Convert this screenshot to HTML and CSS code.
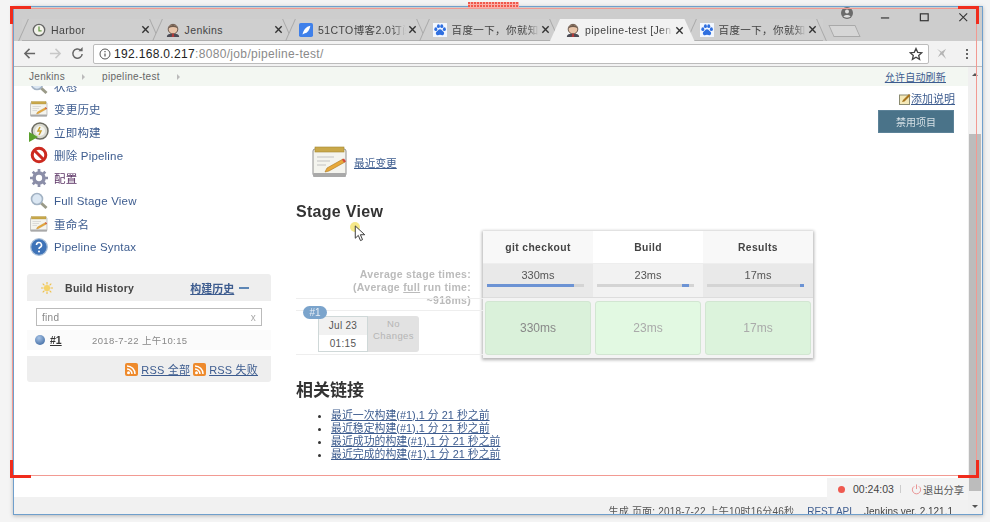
FILE: index.html
```html
<!DOCTYPE html>
<html>
<head>
    <meta charset="utf-8">
    <title>pipeline-test [Jenkins]</title>
    <link rel="stylesheet" href="styles.css">
</head>
<body>
    <svg class="defs" width="0" height="0">
        <symbol id="i-x" viewBox="0 0 10 10"><path d="M1.5 1.5l7 7M8.5 1.5l-7 7" stroke="#333" stroke-width="1.5" fill="none"/></symbol>
        <symbol id="i-jenkins" viewBox="0 0 16 16"><path d="M1 16c0-3 3-4 7-4s7 1 7 4z" fill="#4b4b55"/><circle cx="8" cy="7" r="5.5" fill="#e8c4a8" stroke="#5a4a40"/><path d="M3 6c1-5 9-5 10 0-3-2-7-2-10 0z" fill="#6d5a4c"/><path d="M7 12h2l.5 4h-3z" fill="#b23a3a"/></symbol>
        <symbol id="i-baidu" viewBox="0 0 16 16"><rect width="16" height="16" fill="#f2f7ff"/><g fill="#2f6fe0"><ellipse cx="3.2" cy="7" rx="1.7" ry="2.1"/><ellipse cx="6.2" cy="3.6" rx="1.7" ry="2.2"/><ellipse cx="10" cy="3.6" rx="1.7" ry="2.2"/><ellipse cx="13" cy="7" rx="1.7" ry="2.1"/><path d="M8 7c2 0 2.500 2 4 3 1.500 1.500.5 4-1.500 4-1 0-1.500-.5-2.500-.5s-1.500.5-2.500.5c-2 0-3-2.500-1.500-4 1.500-1 2-3 4-3z"/></g></symbol>
        <symbol id="i-search" viewBox="0 0 18 18"><path d="M10.500 10.500l6 5.500" stroke="#9a9a88" stroke-width="3"/><circle cx="7" cy="7" r="5.500" fill="#dbe7f3" stroke="#a3b3c4" stroke-width="1.600"/></symbol>
        <symbol id="i-notes" viewBox="0 0 36 32"><rect x="1" y="3" width="33" height="27" rx="2" fill="#f4f4ee" stroke="#8f8f8f"/><rect x="1" y="27" width="33" height="4" rx="1" fill="#a9a9a9"/><rect x="3" y="1" width="29" height="5" fill="#c9a84a" stroke="#a48830" stroke-width=".6"/><path d="M5 11h17M5 15h13M5 19h9" stroke="#c2c2c2"/><path d="M13 26l2-4 16-9 2 3-16 9z" fill="#e8a93a" stroke="#a8751e" stroke-width=".6"/><path d="M30 13.500l2-1 2 3-2 1z" fill="#d2473b"/></symbol>
        <symbol id="i-build" viewBox="0 0 20 20"><circle cx="11" cy="9" r="8" fill="#d9d9cf" stroke="#6c6c62" stroke-width="1.500"/><circle cx="11" cy="9" r="5" fill="#f4f4ee"/><path d="M11 5l-2 4h3l-2 4" stroke="#c9a12f" stroke-width="1.500" fill="none"/><path d="M0 10l9 5-9 5z" fill="#5aa02c"/></symbol>
        <symbol id="i-no" viewBox="0 0 18 18"><circle cx="9" cy="9" r="6.800" fill="#fff" stroke="#cc2a20" stroke-width="3"/><path d="M4.500 4.500l9 9" stroke="#cc2a20" stroke-width="3"/></symbol>
        <symbol id="i-gear" viewBox="0 0 20 20"><circle cx="10" cy="10" r="5.500" fill="none" stroke="#8b8ea8" stroke-width="4"/><path d="M10 0v4M10 16v4M0 10h4M16 10h4M3 3l3 3M14 14l3 3M17 3l-3 3M6 14l-3 3" stroke="#8b8ea8" stroke-width="3"/></symbol>
        <symbol id="i-help" viewBox="0 0 18 18"><circle cx="9" cy="9" r="8.300" fill="#3e73b8" stroke="#a9bfd8" stroke-width="1.300"/><path d="M6.500 7a2.500 2.500 0 1 1 3.700 2.200c-.9.500-1.200 1-1.200 1.800" stroke="#fff" stroke-width="1.600" fill="none"/><circle cx="9" cy="13.500" r="1" fill="#fff"/></symbol>
        <symbol id="i-rss" viewBox="0 0 13 13"><rect width="13" height="13" rx="2" fill="#ee8a2c"/><circle cx="3.500" cy="9.800" r="1.500" fill="#fff"/><path d="M2 6a5 5 0 0 1 5 5M2 3a8 8 0 0 1 8 8" stroke="#fff" stroke-width="1.500" fill="none"/></symbol>
    </svg>

    <div class="window">
        <!-- abas do navegador -->
        <div class="tabstrip">
            <div class="tab">
                <svg class="favicon" viewBox="0 0 16 16"><circle cx="8" cy="8" r="6.500" fill="#f2f2ea" stroke="#666" stroke-width="1.500"/><path d="M8 4v5h3" stroke="#6a9a4a" stroke-width="1.500" fill="none"/></svg>
                <span class="tab-title">Harbor</span>
                <svg class="tab-x"><use href="#i-x"/></svg>
            </div>
            <div class="tab">
                <svg class="favicon"><use href="#i-jenkins"/></svg>
                <span class="tab-title">Jenkins</span>
                <svg class="tab-x"><use href="#i-x"/></svg>
            </div>
            <div class="tab">
                <svg class="favicon" viewBox="0 0 16 16"><rect width="16" height="16" rx="2" fill="#3f80ea"/><path d="M4 13c1-5 4-9 9-10-1 5-3 8-7 9z" fill="#fff"/></svg>
                <span class="tab-title tab-fade">51CTO博客2.0订阅</span>
                <svg class="tab-x"><use href="#i-x"/></svg>
            </div>
            <div class="tab">
                <svg class="favicon"><use href="#i-baidu"/></svg>
                <span class="tab-title tab-fade">百度一下，你就知</span>
                <svg class="tab-x"><use href="#i-x"/></svg>
            </div>
            <div class="tab tab-active">
                <svg class="favicon"><use href="#i-jenkins"/></svg>
                <span class="tab-title tab-fade">pipeline-test [Jen</span>
                <svg class="tab-x"><use href="#i-x"/></svg>
            </div>
            <div class="tab">
                <svg class="favicon"><use href="#i-baidu"/></svg>
                <span class="tab-title tab-fade">百度一下，你就知</span>
                <svg class="tab-x"><use href="#i-x"/></svg>
            </div>
            <div class="tab-new"></div>
            <div class="win-controls">
                <svg class="profile" viewBox="0 0 12 12"><circle cx="6" cy="6" r="6" fill="#6b6b6b"/><circle cx="6" cy="4.600" r="2" fill="#ddd"/><path d="M2.500 9.500c1-2 6-2 7 0-1 1.500-6 1.500-7 0z" fill="#ddd"/></svg>
                <svg class="ctl" viewBox="0 0 12 12"><path d="M1 6.500h9" stroke="#333" stroke-width="1.300"/></svg>
                <svg class="ctl" viewBox="0 0 12 12"><rect x="1.500" y="2" width="8.500" height="7.500" fill="none" stroke="#333" stroke-width="1.300"/></svg>
                <svg class="ctl" viewBox="0 0 12 12"><path d="M1.500 1.500l8.500 8.500M10 1.500l-8.500 8.500" stroke="#333" stroke-width="1.200"/></svg>
            </div>
        </div>

        <!-- barra de endereço -->
        <div class="toolbar">
            <svg class="nav-btn" viewBox="0 0 14 14"><path d="M13 7H2M7 2L2 7l5 5" stroke="#666" stroke-width="1.600" fill="none"/></svg>
            <svg class="nav-btn nav-gap" viewBox="0 0 14 14"><path d="M1 7h11M7 2l5 5-5 5" stroke="#c8c8c8" stroke-width="1.600" fill="none"/></svg>
            <svg class="nav-btn nav-reload" viewBox="0 0 14 14"><path d="M12 7.500A5 5 0 1 1 10.500 3.500" stroke="#666" stroke-width="1.600" fill="none"/><path d="M8 4.500h4.500V0z" fill="#666"/></svg>
            <div class="omnibox">
                <svg class="info" viewBox="0 0 12 12"><circle cx="6" cy="6" r="5" fill="none" stroke="#555"/><path d="M6 5.500v3M6 3v1.200" stroke="#555" stroke-width="1.200"/></svg>
                <span class="url-host">192.168.0.217</span><span class="url-rest">:8080/job/pipeline-test/</span>
                <svg class="star" viewBox="0 0 14 14"><path d="M7 1.500l1.700 3.800 4 .4-3 2.700.9 4L7 10.300l-3.600 2.100.9-4-3-2.700 4-.4z" fill="none" stroke="#444" stroke-width="1.300"/></svg>
            </div>
            <svg class="ext" viewBox="0 0 14 14"><path d="M2 2l4 4-3 5 4-3 5 5-3-6 3-5-5 3z" fill="#b5b5b5"/></svg>
            <div class="menu-dots"><i></i><i></i><i></i></div>
        </div>

        <div class="viewport">
            <div class="page">
                <div class="breadcrumbs">
                    <a class="crumb">Jenkins</a><span class="crumb-arrow"></span>
                    <a class="crumb">pipeline-test</a><span class="crumb-arrow"></span>
                    <a class="auto-refresh">允许自动刷新</a>
                </div>

                <div class="content">
                    <div class="sidebar">
                        <ul class="tasks">
                            <li><svg class="task-icon"><use href="#i-search"/></svg><a>状态</a></li>
                            <li><svg class="task-icon" viewBox="0 0 36 32"><use href="#i-notes"/></svg><a>变更历史</a></li>
                            <li><svg class="task-icon task-icon-big"><use href="#i-build"/></svg><a>立即构建</a></li>
                            <li><svg class="task-icon"><use href="#i-no"/></svg><a>删除 Pipeline</a></li>
                            <li><svg class="task-icon"><use href="#i-gear"/></svg><a class="visited">配置</a></li>
                            <li><svg class="task-icon"><use href="#i-search"/></svg><a>Full Stage View</a></li>
                            <li><svg class="task-icon" viewBox="0 0 36 32"><use href="#i-notes"/></svg><a>重命名</a></li>
                            <li><svg class="task-icon"><use href="#i-help"/></svg><a>Pipeline Syntax</a></li>
                        </ul>

                        <div class="history">
                            <div class="history-head">
                                <svg class="sun" viewBox="0 0 14 14"><circle cx="7" cy="7" r="3.600" fill="#f5d36a"/><path d="M7 0v3M7 11v3M0 7h3M11 7h3M2 2l2 2M10 10l2 2M12 2l-2 2M4 10l-2 2" stroke="#efc04a" stroke-width="1.300"/></svg>
                                <span class="history-title">Build History</span>
                                <a class="history-trend">构建历史</a>
                                <span class="history-dash"></span>
                            </div>
                            <div class="history-body">
                                <div class="history-find"><span>find</span><span class="find-x">x</span></div>
                                <div class="history-row">
                                    <span class="ball"></span>
                                    <a class="build-no">#1</a>
                                    <span class="build-date">2018-7-22 上午10:15</span>
                                </div>
                            </div>
                            <div class="history-foot">
                                <svg class="rss"><use href="#i-rss"/></svg><a>RSS 全部</a>
                                <svg class="rss"><use href="#i-rss"/></svg><a>RSS 失败</a>
                            </div>
                        </div>
                    </div>

                    <div class="main">
                        <div class="actions">
                            <div class="add-desc">
                                <svg class="add-icon" viewBox="0 0 12 12"><rect x=".5" y="2" width="10" height="9.500" fill="#f5e9b8" stroke="#8b8b70"/><path d="M3 9l1-2 6-6 1.500 1.500-6 6z" fill="#a8751e"/></svg><a>添加说明</a>
                            </div>
                            <button class="btn-disable">禁用项目</button>
                        </div>

                        <div class="recent">
                            <svg class="recent-icon"><use href="#i-notes"/></svg>
                            <a>最近变更</a>
                        </div>

                        <h2 class="stage-title">Stage View</h2>

                        <div class="stage">
                            <div class="stage-left">
                                <div class="avg-label">
                                    Average stage times:<br>
                                    (Average <u>full</u> run time:<br>
                                    ~918ms)
                                </div>
                                <div class="build-row">
                                    <span class="build-badge">#1</span>
                                    <div class="build-date-box">
                                        <div class="date-day">Jul 23</div>
                                        <div class="date-time">01:15</div>
                                    </div>
                                    <div class="no-changes">No<br>Changes</div>
                                </div>
                            </div>

                            <div class="stage-card">
                                <div class="col">
                                    <div class="col-head">git checkout</div>
                                    <div class="col-avg">330ms<div class="bar"><div class="bar-fill" style="width:90%"></div></div></div>
                                    <div class="col-cell"><div class="cell cell-dark">330ms</div></div>
                                </div>
                                <div class="col col-alt">
                                    <div class="col-head">Build</div>
                                    <div class="col-avg">23ms<div class="bar"><div class="bar-fill" style="width:7%;margin-left:88%"></div></div></div>
                                    <div class="col-cell"><div class="cell cell-light">23ms</div></div>
                                </div>
                                <div class="col">
                                    <div class="col-head">Results</div>
                                    <div class="col-avg">17ms<div class="bar"><div class="bar-fill" style="width:4%;margin-left:96%"></div></div></div>
                                    <div class="col-cell"><div class="cell cell-pale">17ms</div></div>
                                </div>
                            </div>
                        </div>

                        <h2 class="links-title">相关链接</h2>
                        <ul class="links">
                            <li><a>最近一次构建(#1),1 分 21 秒之前</a></li>
                            <li><a>最近稳定构建(#1),1 分 21 秒之前</a></li>
                            <li><a>最近成功的构建(#1),1 分 21 秒之前</a></li>
                            <li><a>最近完成的构建(#1),1 分 21 秒之前</a></li>
                        </ul>
                    </div>
                </div>

                <div class="footer">
                    <span>生成 页面: 2018-7-22 上午10时16分46秒</span>
                    <a class="footer-api">REST API</a>
                    <a class="footer-ver">Jenkins ver. 2.121.1</a>
                </div>
            </div>

            <div class="scrollbar">
                <span class="arrow-up"></span>
                <div class="thumb"></div>
                <span class="arrow-down"></span>
            </div>
        </div>
    </div>

    <!-- moldura de captura da gravação, por cima de tudo -->
    <div class="cap-frame"></div>
    <div class="cap-handle"></div>
    <div class="cap-corner cap-tl"></div>
    <div class="cap-corner cap-tr"></div>
    <div class="cap-corner cap-bl"></div>
    <div class="cap-corner cap-br"></div>

    <div class="rec-bar">
        <span class="rec-dot"></span>
        <span class="rec-time">00:24:03</span>
        <span class="rec-sep"></span>
        <svg class="rec-power" viewBox="0 0 12 12"><path d="M3.500 2.500a4.500 4.500 0 1 0 5 0M6 .5v5" stroke="#e88a8a" stroke-width="1" fill="none"/></svg>
        <span class="rec-exit">退出分享</span>
    </div>

    <div class="pointer-glow"></div>
    <svg class="pointer" viewBox="0 0 12 18"><path d="M1 1v13l3.200-3 2.300 5.500 2.200-1-2.300-5.200H11z" fill="#fff" stroke="#333"/></svg>
</body>
</html>
```

FILE: styles.css
```css
* {
    box-sizing: border-box;
}

html, body {
    margin: 0;
    width: 990px;
    height: 522px;
    overflow: hidden;
}

body {
    background-color: #f4f4f4;
    font-family: "Liberation Sans", "Noto Sans CJK SC", sans-serif;
    font-size: 11px;
    color: #333;
}

a {
    color: #3d5c8f;
}

ul {
    margin: 0;
    padding: 0;
    list-style: none;
}

.defs {
    position: absolute;
}

.window {
    display: flex;
    flex-direction: column;
    width: 970px;
    height: 509px;
    margin: 6px 0 0 13px;
    border: 1px solid #6f9fcc;
    box-shadow: 0 1px 4px rgba(0, 0, 0, .25);
    background-color: #fff;
    filter: blur(.45px);
}

/* abas */
.tabstrip {
    display: flex;
    align-items: flex-end;
    height: 34px;
    padding-left: 8px;
    background-color: #cdcdcd;
    position: relative;
}

.tab {
    display: flex;
    align-items: center;
    flex: none;
    width: 133.500px;
    height: 22px;
    padding: 0 6px 0 10px;
    position: relative;
    border-bottom: 1px solid #b0b0b0;
    background-color: #cfcfcf;
}

.tab::before, .tab::after {
    content: "";
    position: absolute;
    top: 0;
    height: 22px;
    border-right: 1px solid #a9a9a9;
}

.tab::before {
    left: 1px;
    transform: skewX(-24deg);
}

.tab::after {
    right: 1px;
    transform: skewX(24deg);
}

.tab-active {
    background: none;
    border-bottom: 0;
    z-index: 1;
}

.tab-active::before {
    top: 0;
    bottom: 0;
    left: -6px;
    right: -5px;
    height: auto;
    border: 0;
    transform: none;
    background-color: #f2f2f2;
    clip-path: polygon(0 100%, 10px 0, calc(100% - 10px) 0, 100% 100%);
}

.tab-active::after {
    display: none;
}

.favicon {
    flex: none;
    width: 14px;
    height: 14px;
    margin-right: 5px;
    position: relative;
}

.tab-title {
    flex: 1;
    min-width: 0;
    white-space: nowrap;
    letter-spacing: .4px;
    color: #444;
    font-size: 10.500px;
    position: relative;
}

.tab-fade {
    -webkit-mask-image: linear-gradient(to right, #000 86%, transparent);
    mask-image: linear-gradient(to right, #000 86%, transparent);
}

.tab-x {
    flex: none;
    width: 9px;
    height: 9px;
    margin-left: 2px;
    position: relative;
}

.tab-new {
    width: 27px;
    height: 12px;
    margin: 0 0 4px 8px;
    border: 1px solid #a9a9a9;
    background-color: #d6d6d6;
    transform: skewX(24deg);
}

.win-controls {
    position: absolute;
    top: 0;
    right: 0;
    width: 140px;
    height: 20px;
}

.profile {
    position: absolute;
    left: -1px;
    top: 0;
    width: 12px;
    height: 12px;
}

.ctl {
    position: absolute;
    top: 5px;
    width: 11px;
    height: 11px;
}

.ctl:nth-of-type(2) {
    left: 38px;
}

.ctl:nth-of-type(3) {
    left: 77px;
}

.ctl:nth-of-type(4) {
    left: 116px;
}

/* barra de endereço */
.toolbar {
    display: flex;
    align-items: center;
    height: 26px;
    padding-left: 9px;
    background-color: #f2f2f2;
    border-bottom: 1px solid #bdbdbd;
}

.nav-btn {
    flex: none;
    width: 13px;
    height: 13px;
}

.nav-gap {
    margin-left: 13px;
}

.nav-reload {
    margin-left: 9px;
}

.omnibox {
    display: flex;
    align-items: center;
    width: 836px;
    height: 20px;
    margin-left: 9px;
    padding-left: 5px;
    background-color: #fff;
    border: 1px solid #bcbcbc;
    border-radius: 2px;
    font-size: 12px;
    letter-spacing: .33px;
}

.info {
    width: 12px;
    height: 12px;
    margin-right: 3px;
}

.url-host {
    color: #222;
}

.url-rest {
    color: #8a8a8a;
}

.star {
    width: 14px;
    height: 14px;
    margin-left: auto;
    margin-right: 5px;
}

.ext {
    flex: none;
    width: 13px;
    height: 13px;
    margin-left: 6px;
}

.menu-dots {
    display: flex;
    flex-direction: column;
    gap: 2px;
    margin-left: 18px;
}

.menu-dots i {
    width: 2px;
    height: 2px;
    background-color: #666;
}

/* página */
.viewport {
    display: flex;
    flex: 1;
    min-height: 0;
}

.page {
    display: flex;
    flex-direction: column;
    flex: 1;
    min-width: 0;
}

.breadcrumbs {
    display: flex;
    align-items: center;
    flex: none;
    height: 19px;
    padding: 0 22px 0 15px;
    background-color: #f3f7f2;
    font-size: 10px;
    letter-spacing: .3px;
    color: #666;
    position: relative;
    z-index: 1;
}

.crumb {
    color: #666;
}

.crumb-arrow {
    width: 0;
    height: 0;
    margin: 0 17px;
    border-left: 3px solid #bbb;
    border-top: 3px solid transparent;
    border-bottom: 3px solid transparent;
}

.auto-refresh {
    margin-left: auto;
    text-decoration: underline;
    letter-spacing: .2px;
}

.content {
    display: flex;
    flex: 1;
    min-height: 0;
    overflow: hidden;
}

.sidebar {
    flex: none;
    width: 258px;
    padding-left: 13px;
}

.tasks {
    margin-top: -12px;
}

.tasks li {
    display: flex;
    align-items: center;
    height: 23px;
    padding-left: 3px;
    font-size: 11.500px;
    letter-spacing: .2px;
}

.tasks a {
    color: #3d5c8f;
}

.tasks a.visited {
    color: #5c3566;
}

.task-icon {
    flex: none;
    width: 18px;
    height: 18px;
    margin-right: 6px;
}

.task-icon-big {
    width: 20px;
    height: 20px;
    margin: 0 5px 0 -1px;
}

.history {
    width: 244px;
    margin-top: 16px;
    background-color: #eee;
    border-radius: 3px;
}

.history-head {
    display: flex;
    align-items: center;
    height: 27px;
    padding-left: 14px;
}

.sun {
    width: 12px;
    height: 12px;
    margin-right: 12px;
}

.history-title {
    font-weight: bold;
    font-size: 10.500px;
    letter-spacing: .3px;
    color: #444;
}

.history-trend {
    margin-left: 56px;
    font-weight: bold;
    font-size: 11px;
    text-decoration: underline;
}

.history-dash {
    width: 10px;
    height: 2px;
    margin-left: 5px;
    background-color: #5d86b5;
}

.history-body {
    height: 55px;
    padding: 7px 9px 0;
    background-color: #fff;
}

.history-find {
    display: flex;
    justify-content: space-between;
    align-items: center;
    height: 18px;
    padding: 0 5px;
    border: 1px solid #bbb;
    color: #888;
    font-size: 10px;
    letter-spacing: .3px;
}

.find-x {
    color: #aaa;
}

.history-row {
    display: flex;
    align-items: center;
    height: 20px;
    margin: 4px -9px 0;
    padding-left: 8px;
    background-color: #fbfbfb;
}

.ball {
    width: 10px;
    height: 10px;
    margin-right: 5px;
    border-radius: 50%;
    background: radial-gradient(circle at 40% 30%, #a8c4e6, #2f5c98);
}

.build-no {
    width: 42px;
    font-weight: bold;
    font-size: 10.500px;
    color: #333;
    text-decoration: underline;
}

.build-date {
    font-size: 9.500px;
    letter-spacing: .4px;
    color: #888;
}

.history-foot {
    display: flex;
    justify-content: flex-end;
    align-items: center;
    height: 26px;
    padding-right: 13px;
}

.history-foot a {
    letter-spacing: .2px;
    text-decoration: underline;
}

.rss {
    width: 13px;
    height: 13px;
    margin: 0 3px 0 3px;
}

.main {
    display: flex;
    flex-direction: column;
    flex: 1;
    min-width: 0;
    padding-left: 24px;
}

.actions {
    display: flex;
    flex-direction: column;
    align-items: flex-end;
    padding: 5px 14px 0 0;
}

.add-desc {
    display: flex;
    align-items: center;
    height: 13px;
    margin: 0 -1px 6px 0;
}

.add-desc a {
    text-decoration: underline;
}

.add-icon {
    width: 12px;
    height: 12px;
    margin-top: 2px;
}

.btn-disable {
    width: 76px;
    height: 23px;
    padding: 0;
    border: 1px solid #5c8298;
    background-color: #4a7389;
    color: #d5e0e5;
    font-family: inherit;
    font-size: 10px;
}

.recent {
    display: flex;
    align-items: center;
    height: 32px;
    margin: 13px 0 0 16px;
}

.recent-icon {
    width: 36px;
    height: 32px;
    margin-right: 6px;
}

.recent a {
    font-size: 10.700px;
    text-decoration: underline;
}

.stage-title {
    margin: 25px 0 10px;
    font-size: 16px;
    line-height: 18px;
    letter-spacing: .3px;
    color: #333;
}

.stage {
    display: flex;
    height: 127px;
}

.stage-left {
    flex: none;
    width: 187px;
}

.avg-label {
    height: 39px;
    margin-top: 37px;
    padding-right: 12px;
    text-align: right;
    font-weight: bold;
    font-size: 10.500px;
    line-height: 13px;
    letter-spacing: .3px;
    color: #bbb;
}

.build-row {
    display: flex;
    height: 57px;
    margin-top: -9px;
    padding: 17px 0 0 22px;
    border-top: 1px solid #eee;
    border-bottom: 1px solid #eee;
    position: relative;
}

.build-row::before {
    content: "";
    position: absolute;
    left: 0;
    right: 0;
    top: 11px;
    border-top: 1px solid #eee;
}

.build-badge {
    position: absolute;
    left: 7px;
    top: 7px;
    width: 24px;
    height: 13px;
    border-radius: 7px;
    background-color: #7ba4cc;
    color: #e8eef5;
    font-size: 10px;
    line-height: 13px;
    text-align: center;
    z-index: 1;
}

.build-date-box {
    flex: none;
    width: 50px;
    height: 36px;
    border: 1px solid #cfd8d8;
    background-color: #fff;
    text-align: center;
    font-size: 10px;
    letter-spacing: .3px;
    color: #555;
    position: relative;
}

.date-day {
    height: 18px;
    line-height: 18px;
    background-color: #f1f1f1;
}

.date-time {
    line-height: 17px;
}

.no-changes {
    width: 51px;
    height: 36px;
    padding-top: 2px;
    background-color: #e2e2e2;
    border-radius: 0 3px 3px 0;
    text-align: center;
    font-size: 9.500px;
    line-height: 12px;
    letter-spacing: .4px;
    color: #b5b5b5;
    position: relative;
}

.stage-card {
    display: flex;
    flex: none;
    width: 330px;
    height: 127px;
    background-color: #f4f4f4;
    box-shadow: 0 1px 3px 1px rgba(0, 0, 0, .3);
}

.col {
    flex: 1;
}

.col-head {
    height: 33px;
    background-color: #f8f8f8;
    border-bottom: 1px solid #eee;
    text-align: center;
    font-weight: bold;
    font-size: 10.300px;
    line-height: 33px;
    letter-spacing: .4px;
    color: #444;
}

.col-avg {
    height: 34px;
    padding: 5px 4px 0;
    background-color: #e9e9e9;
    border-bottom: 1px solid #ddd;
    text-align: center;
    font-size: 11px;
    line-height: 12px;
    color: #555;
}

.bar {
    height: 3px;
    margin: 3px 5px 0 0;
    background-color: #d4d4d4;
}

.bar-fill {
    height: 3px;
    background-color: #6c93d4;
}

.col-alt .col-head {
    background-color: #fff;
}

.col-alt .col-avg {
    background-color: #f2f2f2;
}

.col-cell {
    height: 60px;
    padding: 3px 2px;
}

.cell {
    display: flex;
    align-items: center;
    justify-content: center;
    height: 100%;
    border: 1px solid #d2e6d2;
    border-radius: 3px;
    font-size: 12px;
}

.cell-dark {
    background-color: #daf1da;
    color: #888;
}

.cell-light {
    background-color: #e2f9e2;
    color: #aaa;
}

.cell-pale {
    background-color: #dcf3dc;
    color: #aaa;
}

.links-title {
    margin: 23px 0 8px;
    font-size: 17px;
    line-height: 20px;
    color: #333;
}

.links {
    padding-left: 35px;
    list-style: disc;
}

.links li {
    font-size: 10.900px;
    line-height: 13px;
}

.links a {
    text-decoration: underline;
}

.footer {
    display: flex;
    flex: none;
    justify-content: flex-end;
    height: 17px;
    padding: 8px 15px 0 0;
    overflow: hidden;
    background-color: #f1f1f1;
    font-size: 10px;
    line-height: 14px;
    color: #555;
}

.footer span {
    letter-spacing: .2px;
}

.footer-api {
    margin-left: 13px;
}

.footer-ver {
    margin-left: 12px;
    color: #444;
}

.scrollbar {
    display: flex;
    flex-direction: column;
    align-items: center;
    flex: none;
    width: 14px;
    padding-top: 6px;
    background-color: #f0f0f0;
}

.thumb {
    width: 12px;
    height: 357px;
    margin-top: 58px;
    background-color: #bcbcbc;
}

.arrow-up, .arrow-down {
    width: 0;
    height: 0;
    border-left: 3px solid transparent;
    border-right: 3px solid transparent;
}

.arrow-up {
    border-bottom: 3px solid #555;
}

.arrow-down {
    margin-top: 14px;
    border-top: 3px solid #555;
}

/* moldura de captura */
.cap-frame {
    position: absolute;
    left: 12px;
    top: 8px;
    width: 965px;
    height: 468px;
    border: 1px solid #f29a92;
}

.cap-handle {
    position: absolute;
    left: 468px;
    top: 2px;
    width: 51px;
    height: 6px;
    background-color: #f0584c;
    background-image: repeating-linear-gradient(to right, transparent 0 2px, #f9b0a8 2px 3px), repeating-linear-gradient(to bottom, transparent 0 2px, #f9b0a8 2px 3px);
}

.cap-corner {
    position: absolute;
    width: 21px;
    height: 18px;
    border: 0 solid #f02c1c;
}

.cap-tl {
    left: 10px;
    top: 6px;
    border-width: 3px 0 0 3px;
}

.cap-tr {
    left: 958px;
    top: 6px;
    border-width: 3px 3px 0 0;
}

.cap-bl {
    left: 10px;
    top: 460px;
    border-width: 0 0 3px 3px;
}

.cap-br {
    left: 958px;
    top: 460px;
    border-width: 0 3px 3px 0;
}

.rec-bar {
    position: absolute;
    left: 827px;
    top: 478px;
    display: flex;
    align-items: center;
    width: 141px;
    height: 22px;
    padding-left: 11px;
    background-color: #f3f3f3;
    font-size: 10.500px;
    color: #444;
}

.rec-dot {
    width: 7px;
    height: 7px;
    margin-right: 8px;
    border-radius: 50%;
    background-color: #ef5a50;
}

.rec-sep {
    height: 8px;
    margin: 0 10px 0 6px;
    border-left: 1px solid #ccc;
}

.rec-power {
    width: 11px;
    height: 11px;
    margin-right: 1px;
}

.rec-exit {
    font-size: 10.300px;
    color: #555;
}

.pointer-glow {
    position: absolute;
    left: 350px;
    top: 222px;
    width: 10px;
    height: 10px;
    border-radius: 50%;
    background-color: #f5e88a;
}

.pointer {
    position: absolute;
    left: 354px;
    top: 225px;
    width: 12px;
    height: 17px;
}
```
